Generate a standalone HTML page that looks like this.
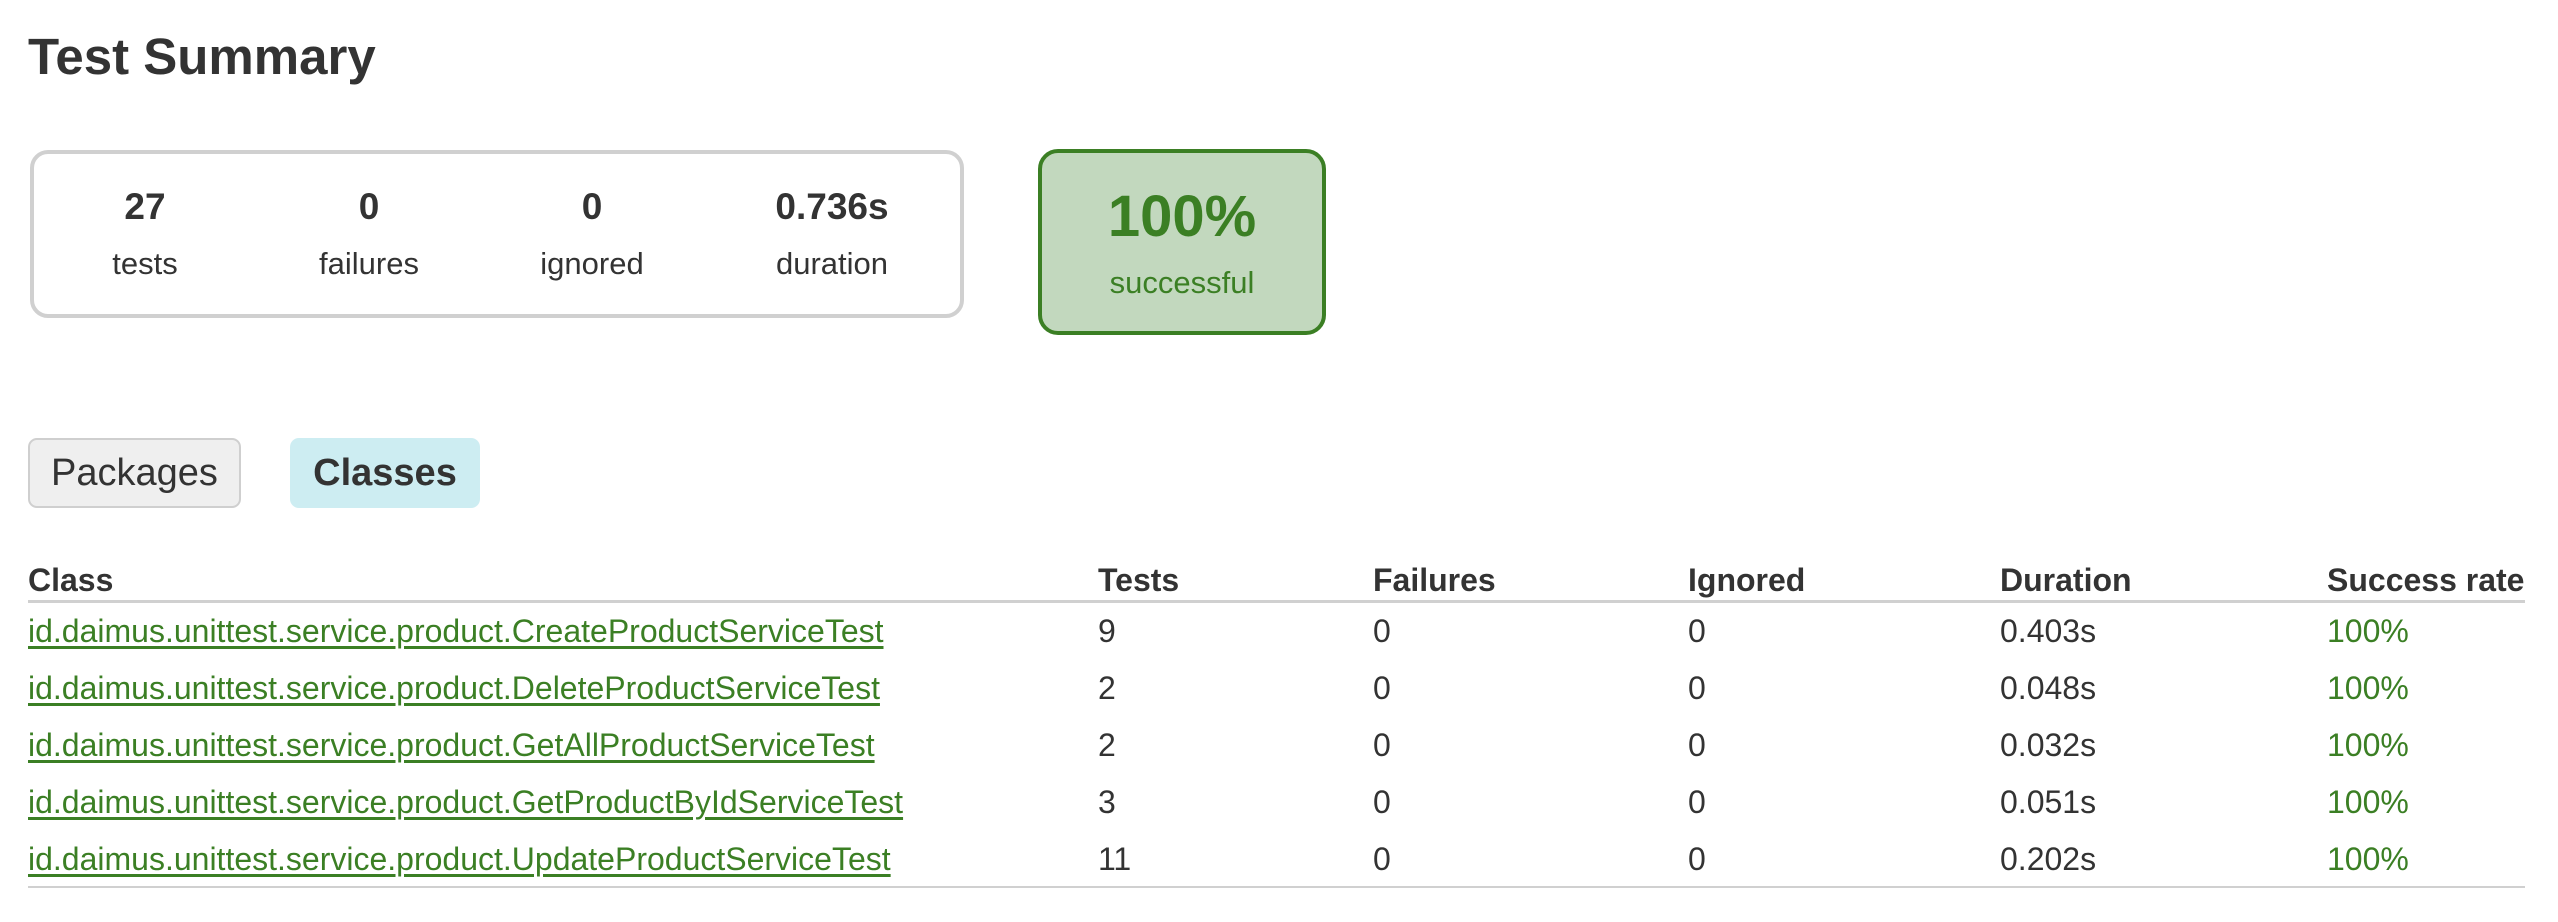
<!DOCTYPE html>
<html><head><meta charset="utf-8"><style>
*{margin:0;padding:0;box-sizing:border-box}
body{width:2558px;height:922px;background:#fff;font-family:"Liberation Sans",Arial,sans-serif;color:#333;position:relative;overflow:hidden}
h1{position:absolute;left:28px;top:28px;font-size:51px;font-weight:bold;line-height:58px;color:#333}
.sum{position:absolute;left:30px;top:150px;width:934px;height:168px;border:4px solid #d0d0d0;border-radius:18px}
.num{position:absolute;font-weight:bold;font-size:37px;transform:translateX(-50%);top:184px;line-height:46px}
.lbl{position:absolute;font-size:31px;transform:translateX(-50%);top:244px;line-height:40px}
.succ{position:absolute;left:1038px;top:149px;width:288px;height:186px;background:#c2d8be;border:4px solid #3b7f24;border-radius:20px;color:#3b7f24;text-align:center}
.succ .p{font-weight:bold;font-size:58px;line-height:66px;margin-top:31px}
.succ .s{font-size:31px;line-height:38px;margin-top:14px}
.tab{position:absolute;top:438px;height:70px;font-size:38px;line-height:66px;text-align:center;border-radius:9px}
.th{position:absolute;top:562px;font-size:32px;font-weight:bold;line-height:36px;white-space:nowrap}
.td{position:absolute;font-size:32px;line-height:36px;white-space:nowrap}
.td a{color:#3b7f24;text-decoration:underline;text-decoration-thickness:3px;text-underline-offset:4px}
.g{color:#3b7f24}
.line{position:absolute;left:28px;width:2497px;height:3px;background:#d0d0d0}
</style></head><body>
<h1>Test Summary</h1>
<div class="sum"></div>
<div class="num" style="left:145px">27</div><div class="lbl" style="left:145px">tests</div>
<div class="num" style="left:369px">0</div><div class="lbl" style="left:369px">failures</div>
<div class="num" style="left:592px">0</div><div class="lbl" style="left:592px">ignored</div>
<div class="num" style="left:832px">0.736s</div><div class="lbl" style="left:832px">duration</div>
<div class="succ"><div class="p">100%</div><div class="s">successful</div></div>
<div class="tab" style="left:28px;width:213px;background:#efefef;border:2px solid #cfcfcf">Packages</div>
<div class="tab" style="left:290px;width:190px;background:#cdedf2;font-weight:bold;line-height:70px">Classes</div>
<div class="th" style="left:28px">Class</div>
<div class="th" style="left:1098px">Tests</div>
<div class="th" style="left:1373px">Failures</div>
<div class="th" style="left:1688px">Ignored</div>
<div class="th" style="left:2000px">Duration</div>
<div class="th" style="left:2327px">Success rate</div>
<div class="line" style="top:600px"></div>

<div class="td" style="left:28px;top:613px"><a>id.daimus.unittest.service.product.CreateProductServiceTest</a></div>
<div class="td" style="left:1098px;top:613px">9</div><div class="td" style="left:1373px;top:613px">0</div><div class="td" style="left:1688px;top:613px">0</div><div class="td" style="left:2000px;top:613px">0.403s</div><div class="td g" style="left:2327px;top:613px">100%</div>

<div class="td" style="left:28px;top:670px"><a>id.daimus.unittest.service.product.DeleteProductServiceTest</a></div>
<div class="td" style="left:1098px;top:670px">2</div><div class="td" style="left:1373px;top:670px">0</div><div class="td" style="left:1688px;top:670px">0</div><div class="td" style="left:2000px;top:670px">0.048s</div><div class="td g" style="left:2327px;top:670px">100%</div>

<div class="td" style="left:28px;top:727px"><a>id.daimus.unittest.service.product.GetAllProductServiceTest</a></div>
<div class="td" style="left:1098px;top:727px">2</div><div class="td" style="left:1373px;top:727px">0</div><div class="td" style="left:1688px;top:727px">0</div><div class="td" style="left:2000px;top:727px">0.032s</div><div class="td g" style="left:2327px;top:727px">100%</div>

<div class="td" style="left:28px;top:784px"><a>id.daimus.unittest.service.product.GetProductByIdServiceTest</a></div>
<div class="td" style="left:1098px;top:784px">3</div><div class="td" style="left:1373px;top:784px">0</div><div class="td" style="left:1688px;top:784px">0</div><div class="td" style="left:2000px;top:784px">0.051s</div><div class="td g" style="left:2327px;top:784px">100%</div>

<div class="td" style="left:28px;top:841px"><a>id.daimus.unittest.service.product.UpdateProductServiceTest</a></div>
<div class="td" style="left:1098px;top:841px">11</div><div class="td" style="left:1373px;top:841px">0</div><div class="td" style="left:1688px;top:841px">0</div><div class="td" style="left:2000px;top:841px">0.202s</div><div class="td g" style="left:2327px;top:841px">100%</div>

<div class="line" style="top:886px;height:2px"></div>
</body></html>
